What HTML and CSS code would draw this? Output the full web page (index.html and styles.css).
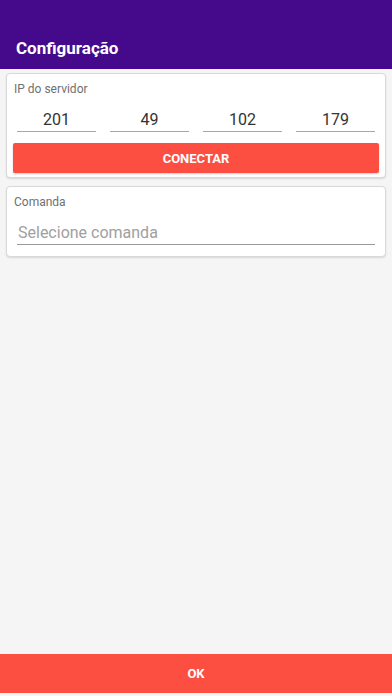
FILE: index.html
```html
<!DOCTYPE html>
<html>

<head>
    <title>Configuração</title>
    <link rel="stylesheet" href="styles.css">
</head>

<body>
    <div class="app">
        <div class="toolbar">
            <h1>Configuração</h1>
        </div>

        <div class="content">
            <div class="card">
                <div class="card-label">IP do servidor</div>
                <div class="ip-row">
                    <input type="text" class="ip-field" value="201">
                    <input type="text" class="ip-field" value="49">
                    <input type="text" class="ip-field" value="102">
                    <input type="text" class="ip-field" value="179">
                </div>
                <button class="btn btn-connect">CONECTAR</button>
            </div>

            <div class="card">
                <div class="card-label">Comanda</div>
                <input type="text" class="select-field" placeholder="Selecione comanda">
            </div>
        </div>

        <button class="btn btn-ok">OK</button>
    </div>
</body>

</html>
```

FILE: styles.css
```css
body {
    margin: 0;
    font-family: Roboto, "Liberation Sans", sans-serif;
    background: #f5f5f5;
}

.app {
    height: 696px;
    display: flex;
    flex-direction: column;
}

.toolbar {
    background-color: #450a8c;
    height: 69px;
    display: flex;
    align-items: flex-end;
    padding: 0 16px 11px;
    box-sizing: border-box;
}

.toolbar h1 {
    margin: 0;
    color: #fff;
    font-size: 17px;
    font-weight: 700;
}

.content {
    flex: 1;
    padding: 4px 6px 0;
}

.card {
    background: #fff;
    border: 1px solid #d9d9d9;
    border-radius: 4px;
    box-shadow: 0 1px 2px rgba(0, 0, 0, 0.12);
    padding: 8px 6px 4px 6px;
    margin-bottom: 8px;
}

.card-label {
    font-size: 12px;
    color: #707070;
    padding-left: 1px;
}

.ip-row {
    display: flex;
    gap: 14px;
    padding: 0 4px;
    margin-top: 14px;
}

.ip-field {
    width: 79px;
    flex: 1;
    border: none;
    border-bottom: 1px solid #a8a8a8;
    padding: 0 0 2px;
    font-family: inherit;
    font-size: 16px;
    color: #333;
    text-align: center;
    outline: none;
}

.btn {
    border: none;
    background-color: #fc4f42;
    color: #fff;
    font-family: inherit;
    font-weight: 700;
    font-size: 13px;
    cursor: pointer;
}

.btn-connect {
    display: block;
    width: 100%;
    height: 30px;
    margin-top: 11px;
    border-radius: 2px;
    box-shadow: 0 1px 2px rgba(0, 0, 0, 0.2);
}

.select-field {
    display: block;
    width: 358px;
    margin: 14px 4px 7px;
    border: none;
    border-bottom: 1px solid #999;
    padding: 0 0 2px 1px;
    font-family: inherit;
    font-size: 16px;
    outline: none;
    box-sizing: border-box;
}

.select-field::placeholder {
    color: #a0a0a0;
}

.btn-ok {
    height: 39px;
    width: 100%;
    margin-bottom: 3px;
}
```
